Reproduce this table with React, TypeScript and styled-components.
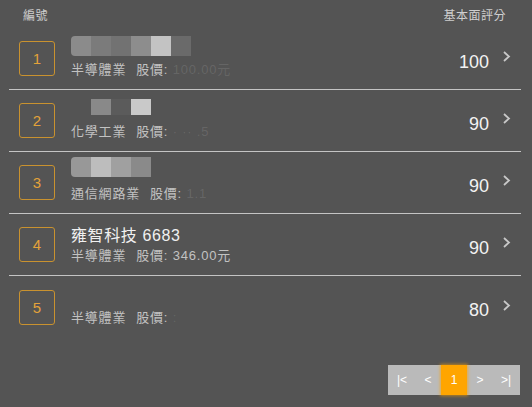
import React from "react";
import styled, { createGlobalStyle } from "styled-components";

const Global = createGlobalStyle`
  html, body { margin: 0; padding: 0; background: #545454; }
  body { font-family: "Liberation Sans", "Noto Sans CJK TC", sans-serif; }
`;

const Page = styled.div`
  width: 532px;
  height: 407px;
  background: #545454;
  display: flex;
  flex-direction: column;
  box-sizing: border-box;
`;

const Header = styled.div`
  height: 28px;
  display: flex;
  align-items: center;
  justify-content: space-between;
  padding: 0 26px 0 23px;
  font-size: 12px;
  color: #cfcfcf;
  font-family: "Noto Sans CJK TC", sans-serif;
  letter-spacing: 0.5px;
`;

const List = styled.div`
  margin: 0 11px 0 9px;
  display: flex;
  flex-direction: column;
`;

const Row = styled.div`
  height: 62px;
  box-sizing: border-box;
  display: flex;
  align-items: center;
  padding: 0 10px;
  border-bottom: 1px solid #c4c4c4;
  &:last-child { border-bottom: none; }
`;

const RankBox = styled.div`
  width: 36px;
  height: 35px;
  box-sizing: border-box;
  border: 1px solid #c9922f;
  border-radius: 3px;
  display: flex;
  align-items: center;
  justify-content: center;
  color: #e3a23a;
  font-size: 15px;
  flex-shrink: 0;
`;

const Info = styled.div`
  margin-left: 16px;
  flex: 1;
  display: flex;
  flex-direction: column;
`;

const Name = styled.div`
  height: 20px;
  font-size: 16px;
  line-height: 20px;
  color: #f0f0f0;
  display: flex;
  align-items: center;
  letter-spacing: 0.6px;
`;

const Blur = styled.div<{ $top: number }>`
  display: flex;
  margin-top: ${(p) => p.$top}px;
  align-self: flex-start;
`;

const Seg = styled.div<{ $c: string; $w: number; $h: number }>`
  width: ${(p) => p.$w}px;
  height: ${(p) => p.$h}px;
  background: ${(p) => p.$c};
  &:first-child { border-radius: 4px 0 0 4px; }
`;

const Sub = styled.div`
  font-size: 13px;
  line-height: 17px;
  margin-top: 1px;
  color: #c2c2c2;
  letter-spacing: 0.8px;
  white-space: nowrap;
`;

const Price = styled.span`
  margin-left: 10px;
`;

const Faint = styled.span`
  color: rgba(220, 220, 220, 0.14);
`;

const Score = styled.div`
  font-size: 18px;
  color: #f2f2f2;
  margin-top: 7px;
`;

const Chevron = styled.svg`
  margin-left: 13px;
  margin-top: -4px;
  width: 9px;
  height: 11px;
`;

const Footer = styled.div`
  display: flex;
  justify-content: flex-end;
  margin-top: auto;
  padding: 0 12px 12px 0;
`;

const Pager = styled.div`
  display: flex;
  background: #bababa;
  height: 30px;
  padding: 0 1px;
`;

const PageBtn = styled.div<{ $active?: boolean }>`
  width: 26px;
  height: 30px;
  display: flex;
  align-items: center;
  justify-content: center;
  font-size: 12px;
  color: #ffffff;
  background: ${(p) => (p.$active ? "#ffa500" : "transparent")};
  box-shadow: ${(p) => (p.$active ? "0 0 3px 1px rgba(255,165,0,0.6)" : "none")};
`;

type Item = {
  rank: number;
  name?: string;
  blur?: { c: string; w: number }[];
  blurH?: number;
  blurTop?: number;
  industry: string;
  price?: string;
  faintPrice?: string;
  score: number;
};

const items: Item[] = [
  {
    rank: 1,
    blur: [
      { c: "#8b8b8b", w: 20 },
      { c: "#7b7b7b", w: 20 },
      { c: "#727272", w: 20 },
      { c: "#8d8d8d", w: 20 },
      { c: "#c3c3c3", w: 20 },
      { c: "#6a6a6a", w: 20 },
    ],
    blurH: 20,
    blurTop: -4,
    industry: "半導體業",
    faintPrice: "100.00元",
    score: 100,
  },
  {
    rank: 2,
    blur: [
      { c: "transparent", w: 20 },
      { c: "#898989", w: 20 },
      { c: "#5b5b5b", w: 20 },
      { c: "#c9c9c9", w: 20 },
    ],
    blurH: 16,
    blurTop: -3,
    industry: "化學工業",
    faintPrice: "  ·  ·· .5",
    score: 90,
  },
  {
    rank: 3,
    blur: [
      { c: "#989898", w: 20 },
      { c: "#bdbdbd", w: 20 },
      { c: "#a0a0a0", w: 20 },
      { c: "#8a8a8a", w: 20 },
    ],
    blurH: 20,
    blurTop: -7,
    industry: "通信網路業",
    faintPrice: "1.1",
    score: 90,
  },
  {
    rank: 4,
    name: "雍智科技 6683",
    industry: "半導體業",
    price: "346.00元",
    score: 90,
  },
  {
    rank: 5,
    blur: [],
    blurH: 20,
    blurTop: 0,
    industry: "半導體業",
    faintPrice: ":",
    score: 80,
  },
];

const ChevronIcon = () => (
  <Chevron viewBox="0 0 9 11">
    <polyline points="2,1 7,5.5 2,10" fill="none" stroke="#c8c8c8" strokeWidth="1.8" />
  </Chevron>
);

export default function App() {
  return (
    <Page>
      <Global />
      <Header>
        <span>編號</span>
        <span>基本面評分</span>
      </Header>
      <List>
        {items.map((it) => (
          <Row key={it.rank}>
            <RankBox>{it.rank}</RankBox>
            <Info>
              <Name>
                {it.name ? (
                  it.name
                ) : (
                  <Blur $top={it.blurTop ?? 0}>
                    {it.blur!.map((s, i) => (
                      <Seg key={i} $c={s.c} $w={s.w} $h={it.blurH ?? 20} />
                    ))}
                  </Blur>
                )}
              </Name>
              <Sub>
                {it.industry}
                <Price>
                  股價: {it.price ? it.price : <Faint>{it.faintPrice}</Faint>}
                </Price>
              </Sub>
            </Info>
            <Score>{it.score}</Score>
            <ChevronIcon />
          </Row>
        ))}
      </List>
      <Footer>
        <Pager>
          <PageBtn>|&lt;</PageBtn>
          <PageBtn>&lt;</PageBtn>
          <PageBtn $active>1</PageBtn>
          <PageBtn>&gt;</PageBtn>
          <PageBtn>&gt;|</PageBtn>
        </Pager>
      </Footer>
    </Page>
  );
}
